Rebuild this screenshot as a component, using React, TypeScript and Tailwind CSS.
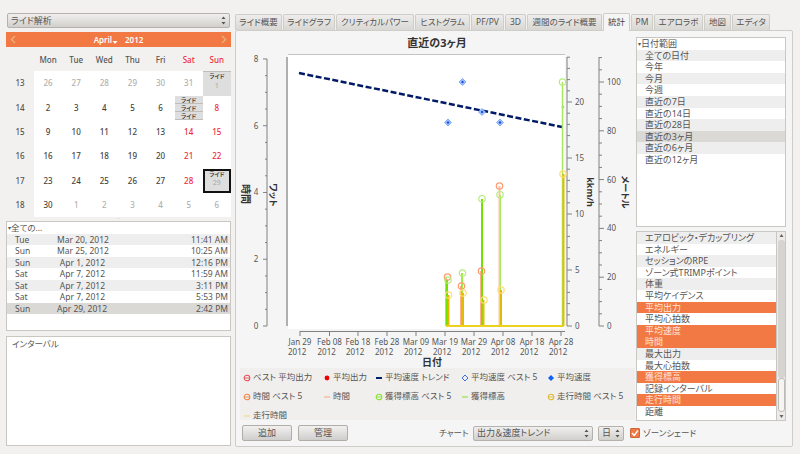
const FONT = `"Noto Sans", "Noto Sans CJK JP", sans-serif`

const tabs = [
  { label: "ライド概要", w: "w-[47px]" },
  { label: "ライドグラフ", w: "w-[52px]" },
  { label: "クリティカルパワー", w: "w-[78px]" },
  { label: "ヒストグラム", w: "w-[55px]" },
  { label: "PF/PV", w: "w-[33px]" },
  { label: "3D", w: "w-[21px]" },
  { label: "週間のライド概要", w: "w-[75px]" },
  { label: "統計", w: "w-[27px]", active: true },
  { label: "PM", w: "w-[22px]" },
  { label: "エアロラボ", w: "w-[49px]" },
  { label: "地図", w: "w-[27px]" },
  { label: "エディタ", w: "w-[38px]" },
]

const weeks = [
  { no: 13, days: ["26", "27", "28", "29", "30", "31", "1"], dim: [0, 1, 2, 3, 4, 5, 6] },
  { no: 14, days: ["2", "3", "4", "5", "6", "", "8"], dim: [] },
  { no: 15, days: ["9", "10", "11", "12", "13", "14", "15"], dim: [] },
  { no: 16, days: ["16", "17", "18", "19", "20", "21", "22"], dim: [] },
  { no: 17, days: ["23", "24", "25", "26", "27", "28", "29"], dim: [] },
  { no: 18, days: ["30", "1", "2", "3", "4", "5", "6"], dim: [1, 2, 3, 4, 5, 6] },
]

const rides = [
  ["Tue", "Mar 20, 2012", "11:41 AM"],
  ["Sun", "Mar 25, 2012", "10:25 AM"],
  ["Sun", "Apr 1, 2012", "12:16 PM"],
  ["Sat", "Apr 7, 2012", "11:59 AM"],
  ["Sat", "Apr 7, 2012", "3:11 PM"],
  ["Sat", "Apr 7, 2012", "5:53 PM"],
  ["Sun", "Apr 29, 2012", "2:42 PM"],
]

const ranges = ["全ての日付", "今年", "今月", "今週", "直近の7日", "直近の14日", "直近の28日", "直近の3ヶ月", "直近の6ヶ月", "直近の12ヶ月"]

const metrics = [
  { t: "エアロビック・デカップリング" },
  { t: "エネルギー" },
  { t: "セッションのRPE" },
  { t: "ゾーン式TRIMPポイント" },
  { t: "体重" },
  { t: "平均ケイデンス" },
  { t: "平均出力", on: true },
  { t: "平均心拍数" },
  { t: "平均速度", on: true },
  { t: "時間", on: true },
  { t: "最大出力" },
  { t: "最大心拍数" },
  { t: "獲得標高", on: true },
  { t: "記録インターバル" },
  { t: "走行時間", on: true },
  { t: "距離" },
]

const xLabels = ["Jan 29", "Feb 08", "Feb 18", "Feb 28", "Mar 09", "Mar 19", "Mar 29", "Apr 08", "Apr 18", "Apr 28"]
const xPos = [300, 329.5, 358, 387, 416, 445, 474, 503, 532, 561]

function Spinner() {
  return (
    <svg width="5" height="9" viewBox="0 0 5 9" className="shrink-0">
      <path d="M2.5 0.5 L4.5 3 H0.5 Z M2.5 8.5 L4.5 6 H0.5 Z" fill="#555" />
    </svg>
  )
}

function Combo({ label, className }: { label: string; className: string }) {
  return (
    <div className={`flex items-center justify-between px-[3px] h-[15px] rounded-[2px] border border-[#b5b2ac] bg-gradient-to-b from-[#f0efee] to-[#d2d0cc] text-[9px] text-[#555] ${className}`}>
      <span className="truncate">{label}</span>
      <Spinner />
    </div>
  )
}

function Button({ label }: { label: string }) {
  return (
    <div className="flex items-center justify-center w-[50px] h-[16px] rounded-[2px] border border-[#b0ada7] bg-gradient-to-b from-[#f2f1f0] to-[#d0cecb] text-[9px] text-[#555]">
      {label}
    </div>
  )
}

function RideStrip() {
  return <div className="h-[8px] leading-[8px] text-center text-[6px] text-[#333] bg-[#dedede] border-b border-[#bdbdbd]">ライド</div>
}

function Calendar() {
  return (
    <div>
      <div className="flex items-center justify-between h-[15px] bg-[#f27844] px-[4px] text-white text-[8px] font-semibold">
        <svg width="6" height="9" viewBox="0 0 6 9"><path d="M5 1 L1.5 4.5 L5 8" fill="none" stroke="#e8b27a" strokeWidth="1.4" /></svg>
        <div className="flex items-center gap-[7px]">
          <span className="flex items-end">April<svg width="6" height="5" viewBox="0 0 6 5" className="mb-[1px]"><path d="M0.5 1 H5.5 L3 4 Z" fill="#fff" /></svg></span>
          <span>2012</span>
        </div>
        <svg width="6" height="9" viewBox="0 0 6 9"><path d="M1 1 L4.5 4.5 L1 8" fill="none" stroke="#e8b27a" strokeWidth="1.4" /></svg>
      </div>
      <div className="grid grid-cols-[28px_repeat(7,28.14px)] auto-rows-[24.33px] text-[8px] font-medium">
        <div className="col-span-1 h-[25px]" />
        {["Mon", "Tue", "Wed", "Thu", "Fri", "Sat", "Sun"].map((d, i) => (
          <div key={d} className={`flex items-center justify-center h-[25px] ${i > 4 ? "text-[#f02a3c]" : "text-[#555]"}`}>{d}</div>
        ))}
        {weeks.map((w) => (
          <div key={w.no} className="contents">
            <div className="flex items-center justify-center text-[#555]">{w.no}</div>
            {w.days.map((d, i) => {
              const dim = (w.dim as number[]).includes(i)
              const color = dim ? "text-[#b0b0b0]" : i > 4 ? "text-[#f02a3c]" : "text-[#444]"
              if (w.no === 14 && i === 5) {
                return (
                  <div key={i} className="bg-white pt-[0.5px]">
                    <RideStrip />
                    <RideStrip />
                    <RideStrip />
                  </div>
                )
              }
              if (w.no === 13 && i === 6) {
                return (
                  <div key={i} className="bg-[#dedede] border-t border-[#bdbdbd] flex flex-col items-center text-[#b0b0b0]">
                    <span className="text-[6px] leading-[8px] text-[#333]">ライド</span>
                    <span className="text-[7px] leading-[12px]">1</span>
                  </div>
                )
              }
              if (w.no === 17 && i === 6) {
                return (
                  <div key={i} className="bg-[#dedede] border-2 border-[#111] flex flex-col items-center">
                    <span className="text-[6px] leading-[7px] text-[#333]">ライド</span>
                    <span className="text-[7px] leading-[10px] text-[#b0b0b0]">29</span>
                  </div>
                )
              }
              return <div key={i} className={`flex items-center justify-center bg-white ${color}`}>{d}</div>
            })}
          </div>
        ))}
      </div>
    </div>
  )
}

function Splitter() {
  return <div className="h-[4px] flex items-center justify-center text-[4px] leading-none text-[#bbb]">···</div>
}

function Chart() {
  const leftTicks = Array.from({ length: 17 }, (_, i) => i)
  const speedTicks = Array.from({ length: 25 }, (_, i) => i)
  const altTicks = Array.from({ length: 23 }, (_, i) => i)
  const txt = "#555"
  const axis = "#808080"
  return (
    <svg viewBox="240 34 392 334" className="w-[392px] h-[334px] shrink-0 overflow-visible" style={{ fontFamily: FONT, fontFeatureSettings: '"palt"' }}>
      <rect x="288" y="54" width="277" height="275" fill="#fff" />
      <line x1="288" y1="54.5" x2="565" y2="54.5" stroke="#c4c4c4" />
      <text x="437" y="47" textAnchor="middle" fontSize="11" fontWeight="700" fill="#333">直近の3ヶ月</text>

      {/* left axes */}
      <line x1="267" y1="59" x2="267" y2="326" stroke={axis} />
      <line x1="287" y1="57" x2="287" y2="326" stroke={axis} strokeWidth="1.2" />
      {leftTicks.map((i) => (
        <line key={i} x1={i % 4 === 0 ? 263 : 265} x2="267" y1={326 - i * 16.69} y2={326 - i * 16.69} stroke={axis} />
      ))}
      {[0, 2, 4, 6, 8].map((v) => (
        <text key={v} x="256" y={329 - v * 33.38} textAnchor="middle" fontSize="8" fill={txt}>{v}</text>
      ))}
      <text transform="translate(242 194) rotate(90)" textAnchor="middle" fontSize="10" fontWeight="700" fill="#333">時間</text>
      <text transform="translate(270 195) rotate(90)" textAnchor="middle" fontSize="9" fontWeight="700" fill="#333">ワット</text>

      {/* right axes */}
      <line x1="567" y1="57" x2="567" y2="326" stroke={axis} />
      {speedTicks.map((i) => (
        <line key={i} x1="567" x2={i % 5 === 0 ? 572 : 570} y1={326 - i * 11.2} y2={326 - i * 11.2} stroke={axis} />
      ))}
      {[0, 5, 10, 15, 20].map((v) => (
        <text key={v} x="575" y={329 - v * 11.2} fontSize="8" fill={txt}>{v}</text>
      ))}
      <text transform="translate(587 192) rotate(90)" textAnchor="middle" fontSize="9" fontWeight="700" fill="#333">kkm/h</text>
      <line x1="599" y1="57" x2="599" y2="326" stroke={axis} />
      {altTicks.map((i) => (
        <line key={i} x1="599" x2={i % 4 === 0 ? 604 : 602} y1={326 - i * 12.2} y2={326 - i * 12.2} stroke={axis} />
      ))}
      {[0, 20, 40, 60, 80, 100].map((v) => (
        <text key={v} x="607" y={329 - v * 2.44} fontSize="8" fill={txt}>{v}</text>
      ))}
      <text transform="translate(622 192) rotate(90)" textAnchor="middle" fontSize="9" fontWeight="700" fill="#333">メートル</text>

      {/* x axis */}
      <line x1="300" y1="331.5" x2="565" y2="331.5" stroke={axis} strokeWidth="1.2" />
      {xPos.map((x, i) => (
        <g key={x}>
          <line x1={x} x2={x} y1="331" y2="336" stroke={axis} />
          <text x={x} y="345" textAnchor="middle" fontSize="8" fill={txt}>{xLabels[i]}</text>
          <text x={x - 12} y="355" fontSize="8" fill={txt}>2012</text>
        </g>
      ))}
      <text x="432" y="366" textAnchor="middle" fontSize="10" fontWeight="700" fill="#333">日付</text>

      {/* trend */}
      <line x1="299" y1="73" x2="562" y2="127" stroke="#001a66" strokeWidth="2.5" strokeDasharray="6 2.5" />

      {/* speed best 5 */}
      {[[448, 122.5], [462.5, 82], [482, 112], [500, 122.5]].map(([x, y]) => (
        <g key={x}>
          <path d={`M${x} ${y - 3.5} L${x + 3.5} ${y} L${x} ${y + 3.5} L${x - 3.5} ${y} Z`} fill="#a5c3ff" stroke="#6f9ef8" strokeWidth="0.8" />
          <circle cx={x} cy={y} r="1.2" fill="#1a50e0" />
        </g>
      ))}
      <circle cx="563" cy="107" r="1.5" fill="#a9c3f5" />

      {/* bars */}
      <line x1="446" x2="446" y1="277" y2="326" stroke="#ffb08e" strokeWidth="2" />
      <line x1="447" x2="447" y1="280" y2="326" stroke="#72e000" strokeWidth="2" />
      <line x1="448.5" x2="448.5" y1="295" y2="326" stroke="#e0bd00" strokeWidth="2" />
      <line x1="461" x2="461" y1="286" y2="326" stroke="#ffb08e" strokeWidth="2" />
      <line x1="462" x2="462" y1="273" y2="326" stroke="#7fe500" strokeWidth="1.5" />
      <line x1="463" x2="463" y1="293" y2="326" stroke="#e0bd00" strokeWidth="2" />
      <line x1="481" x2="481" y1="271" y2="326" stroke="#ffb08e" strokeWidth="2" />
      <line x1="482" x2="482" y1="199" y2="326" stroke="#72e000" strokeWidth="2" />
      <line x1="483.5" x2="483.5" y1="300" y2="326" stroke="#e0bd00" strokeWidth="2" />
      <line x1="499.5" x2="499.5" y1="186" y2="326" stroke="#ffc2a8" strokeWidth="2" />
      <line x1="500.5" x2="500.5" y1="195" y2="326" stroke="#a8e85c" strokeWidth="1" />
      <line x1="501" x2="501" y1="290" y2="326" stroke="#e0bd00" strokeWidth="2" />
      <line x1="562.5" x2="562.5" y1="82" y2="326" stroke="#a8e85c" strokeWidth="1.5" />
      <line x1="563.5" x2="563.5" y1="174" y2="326" stroke="#e0bd00" strokeWidth="2" />
      <line x1="446" x2="564" y1="326" y2="326" stroke="#ecd21e" strokeWidth="2" />

      {/* best 5 markers */}
      {[[447.5, 277], [461.5, 286], [481.5, 271], [499.5, 186]].map(([x, y]) => (
        <circle key={x} cx={x} cy={y} r="3.2" fill="none" stroke="#ff9a70" strokeWidth="1.2" />
      ))}
      {[[448, 280], [462.5, 273], [482, 198.7], [500, 194.7], [562.5, 82]].map(([x, y]) => (
        <circle key={x} cx={x} cy={y} r="3.2" fill="none" stroke="#b4ee7c" strokeWidth="1.2" />
      ))}
      {[[448.5, 295], [463, 293], [484, 300], [501, 290], [563, 174]].map(([x, y]) => (
        <circle key={x} cx={x} cy={y} r="3.2" fill="none" stroke="#ffdd70" strokeWidth="1.2" />
      ))}
    </svg>
  )
}

function LegendMark({ kind, color }: { kind: string; color: string }) {
  return (
    <svg width="8" height="8" viewBox="0 0 8 8" className="shrink-0">
      {kind === "ring" && (
        <>
          <circle cx="4" cy="4" r="2.8" fill="none" stroke={color} strokeWidth="1.1" />
          <line x1="2" x2="6" y1="4" y2="4" stroke={color} strokeWidth="0.9" />
        </>
      )}
      {kind === "dot" && <circle cx="4" cy="4" r="2.4" fill={color} />}
      {kind === "bar" && <rect x="1" y="3" width="6" height="2" fill={color} />}
      {kind === "dash" && <line x1="1" x2="7" y1="4" y2="4" stroke={color} />}
      {kind === "diamond" && <path d="M4 1 L7 4 L4 7 L1 4 Z" fill={color} />}
      {kind === "ringd" && <path d="M4 1 L7 4 L4 7 L1 4 Z" fill="none" stroke={color} />}
    </svg>
  )
}

const legend = [
  { t: "ベスト 平均出力", k: "ring", c: "#e8505a" },
  { t: "平均出力", k: "dot", c: "#f00000" },
  { t: "平均速度 トレンド", k: "bar", c: "#001f6b" },
  { t: "平均速度 ベスト 5", k: "ringd", c: "#3a70e0" },
  { t: "平均速度", k: "diamond", c: "#1060f0" },
  { t: "時間 ベスト 5", k: "ring", c: "#f0884a" },
  { t: "時間", k: "dash", c: "#f5a67c" },
  { t: "獲得標高 ベスト 5", k: "ring", c: "#86e02c" },
  { t: "獲得標高", k: "dash", c: "#86e02c" },
  { t: "走行時間 ベスト 5", k: "ring", c: "#e0b82a" },
  { t: "走行時間", k: "dash", c: "#eed77a" },
]

export default function App() {
  return (
    <div className="flex w-[800px] h-[454px] overflow-hidden bg-[#f2f1f0] pt-[13px] pl-[6px] text-[#555] [font-feature-settings:'palt']" style={{ fontFamily: FONT }}>
      {/* Left sidebar */}
      <div className="w-[225px] shrink-0 flex flex-col">
        <Combo label="ライド解析" className="ml-[1px] w-[223px]" />
        <div className="h-[4px]" />
        <Calendar />
        <Splitter />
        <div className="h-[110px] bg-white border border-[#c9c7c2] text-[8.5px]">
          <div className="h-[11.5px] leading-[11.5px] pl-[1px]">
            <span className="text-[6px] align-middle">▾</span>全ての...
          </div>
          {rides.map((r, i) => (
            <div
              key={i}
              className={`grid grid-cols-[42px_48px_1fr] pl-[8px] pr-[2px] h-[11.5px] leading-[11.5px] ${
                i === 6 ? "bg-[#dbd9d5]" : i % 2 === 0 ? "bg-[#eeeeee]" : "bg-white"
              }`}
            >
              <span>{r[0]}</span>
              <span className="text-right whitespace-nowrap">{r[1]}</span>
              <span className="text-right">{r[2]}</span>
            </div>
          ))}
        </div>
        <div className="h-[5px]" />
        <div className="h-[110px] bg-white border border-[#c9c7c2] pl-[5px] pt-[1px] text-[8.5px]">インターバル</div>
      </div>

      {/* Main tabbed panel */}
      <div className="ml-[4px] w-[558px] shrink-0 flex flex-col">
        <div className="flex h-[17px] items-end gap-[1px] text-[8.5px]">
          {tabs.map((t) => (
            <div
              key={t.label}
              className={`${t.w} shrink-0 flex items-center justify-center whitespace-nowrap rounded-t-[2px] border border-b-0 border-[#cfcdc8] ${
                t.active ? "h-[18px] bg-[#f5f5f5] text-[#444] -mb-[1px] z-10" : "h-[16px] bg-gradient-to-b from-[#eeedeb] to-[#d9d7d3]"
              }`}
            >
              {t.label}
            </div>
          ))}
        </div>
        <div className="h-[417px] w-[558px] bg-[#f5f5f5] border border-[#cfcdc8] rounded-[2px] flex pl-[4px]">
          {/* Chart column */}
          <div className="w-[392px] shrink-0 flex flex-col">
            <div className="h-[3px]" />
            <Chart />
            <div className="grid grid-cols-[80px_52px_86px_86px_1fr] bg-[#f0efee] h-[52px] auto-rows-[19px] pl-[3px] w-[395px] text-[8.5px]">
              {legend.map((l) => (
                <div key={l.t} className="flex items-center gap-[2px] whitespace-nowrap">
                  <LegendMark kind={l.k} color={l.c} />
                  <span>{l.t}</span>
                </div>
              ))}
            </div>
            <div className="flex items-center h-[16px] mt-[5px] pl-[2px] w-[395px] text-[8.5px]">
              <Button label="追加" />
              <div className="w-[6px]" />
              <Button label="管理" />
              <span className="ml-[91px] w-[34px]">チャート</span>
              <Combo label="出力＆速度トレンド" className="w-[120px]" />
              <Combo label="日" className="w-[26px] ml-[5px]" />
            </div>
          </div>

          {/* Right lists */}
          <div className="ml-[4px] w-[150px] shrink-0 flex flex-col">
            <div className="h-[6px]" />
            <div className="h-[190px] bg-white border border-[#c9c7c2] text-[9px]">
              <div className="h-[11.6px] leading-[11.6px] pl-[1px]">
                <span className="text-[6px] align-middle">▾</span>日付範囲
              </div>
              {ranges.map((r, i) => (
                <div
                  key={r}
                  className={`h-[11.6px] leading-[11.6px] pl-[8px] ${
                    r === "直近の3ヶ月" ? "bg-[#dbd9d5]" : i % 2 === 0 ? "bg-[#eeeeee]" : "bg-white"
                  }`}
                >
                  {r}
                </div>
              ))}
            </div>
            <div className="h-[4px]" />
            <div className="flex h-[190px]">
              <div className="w-[141px] bg-white border border-[#c9c7c2] text-[9px] overflow-hidden">
                {metrics.map((m, i) => (
                  <div
                    key={m.t}
                    className={`h-[11.6px] leading-[11.6px] pl-[8px] whitespace-nowrap ${
                      m.on ? "bg-[#f27844] text-[#ffe3d5]" : i % 2 === 0 ? "bg-[#eeeeee]" : "bg-white"
                    }`}
                  >
                    {m.t}
                  </div>
                ))}
              </div>
              <div className="w-[9px] flex flex-col items-center bg-[#ecebe9] border border-l-0 border-[#c9c7c2]">
                <svg width="5" height="8" viewBox="0 0 5 8" className="shrink-0"><path d="M2.5 2 L4.5 5 H0.5 Z" fill="#666" /></svg>
                <div className="w-[7px] h-[140px] bg-[#d6d4d0] rounded-[3px]" />
                <div className="w-[7px] h-[35px] bg-[#f6f5f4] border border-[#bdbbb6] rounded-[3px]" />
                <svg width="5" height="8" viewBox="0 0 5 8" className="shrink-0"><path d="M2.5 6 L4.5 3 H0.5 Z" fill="#666" /></svg>
              </div>
            </div>
            <div className="flex items-center gap-[3px] h-[16px] mt-[4px] -ml-[6px] text-[8.5px] whitespace-nowrap">
              <div className="w-[10px] h-[10px] rounded-[1px] bg-[#f27844] border border-[#c9683c] flex items-center justify-center">
                <svg width="8" height="8" viewBox="0 0 8 8"><path d="M1 4 L3.2 6.4 L7 1.5" fill="none" stroke="#fff" strokeWidth="1.4" /></svg>
              </div>
              <span>ゾーンシェード</span>
            </div>
          </div>
        </div>
      </div>
    </div>
  )
}
